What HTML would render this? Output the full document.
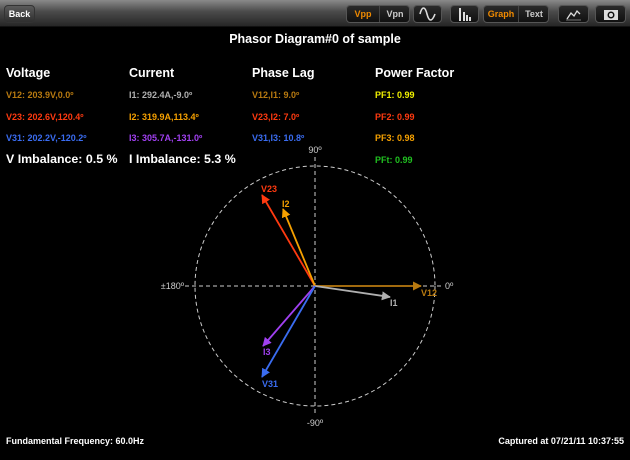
<!DOCTYPE html>
<html><head><meta charset="utf-8"><style>
*{margin:0;padding:0;box-sizing:border-box}
body{width:630px;height:460px;background:#000;position:relative;overflow:hidden;font-family:"Liberation Sans",Arial,sans-serif;font-weight:bold;color:#fff}
.t{position:absolute;white-space:nowrap}
.bar{position:absolute;left:0;top:0;width:630px;height:27px;background:linear-gradient(#8a8a8a,#4a4a4a 45%,#262626);border-bottom:1px solid #111}
.btn{position:absolute;top:5px;height:18px;border-radius:4px;background:linear-gradient(#2a2a2a,#101010);border:1px solid #555;font-size:9px;color:#ccc;text-align:center;line-height:16px}
.h{font-size:12.5px;top:66px}
.v{font-size:9px}
.b{font-size:12.4px;top:152px}
</style></head><body>
<div class="bar"></div>
<div class="btn" style="left:4px;width:31px;color:#fff;background:linear-gradient(#5a5a5a,#2e2e2e);border-color:#333">Back</div>
<div class="btn" style="left:346px;width:64px"><span style="position:absolute;left:0;width:32px;color:#f08a00">Vpp</span><span style="position:absolute;left:32px;width:31px;border-left:1px solid #444">Vpn</span></div>
<div class="btn" style="left:413px;width:29px"><svg width="27" height="16" viewBox="0 0 27 16"><path d="M6 8 C8 0,11 0,13 8 S18 16,21 8" stroke="#ddd" stroke-width="1.6" fill="none"/></svg></div>
<div class="btn" style="left:450px;width:29px"><svg width="27" height="16"><g fill="#ddd"><rect x="8" y="2" width="2" height="13"/><rect x="12" y="6" width="2" height="9"/><rect x="15" y="9" width="2" height="6"/><rect x="18" y="11" width="2" height="4"/></g></svg></div>
<div class="btn" style="left:483px;width:66px"><span style="position:absolute;left:0;width:34px;color:#f08a00">Graph</span><span style="position:absolute;left:34px;width:31px;border-left:1px solid #444">Text</span></div>
<div class="btn" style="left:558px;width:31px"><svg width="29" height="16"><path d="M8 13 L12 7 L15 10 L18 5 L21 8" stroke="#ddd" stroke-width="1.3" fill="none"/><path d="M7 14 H22" stroke="#777"/></svg></div>
<div class="btn" style="left:595px;width:31px"><svg width="29" height="16"><rect x="8" y="4" width="14" height="10" fill="#ddd"/><circle cx="15" cy="9" r="3.5" fill="#111"/><circle cx="15" cy="9" r="2" fill="#ddd"/></svg></div>

<div class="t" style="left:0;width:630px;text-align:center;top:32px;font-size:12.5px">Phasor Diagram#0 of sample</div>

<div class="t h" style="left:6px">Voltage</div>
<div class="t h" style="left:129px">Current</div>
<div class="t h" style="left:252px">Phase Lag</div>
<div class="t h" style="left:375px">Power Factor</div>

<div class="t v" style="left:6px;top:90px;color:#b87a10">V12: 203.9V,0.0º</div>
<div class="t v" style="left:6px;top:112px;color:#ff3a10">V23: 202.6V,120.4º</div>
<div class="t v" style="left:6px;top:133px;color:#3a6cf0">V31: 202.2V,-120.2º</div>
<div class="t v" style="left:129px;top:90px;color:#b0b0b0">I1: 292.4A,-9.0º</div>
<div class="t v" style="left:129px;top:112px;color:#f5a000">I2: 319.9A,113.4º</div>
<div class="t v" style="left:129px;top:133px;color:#a040f0">I3: 305.7A,-131.0º</div>
<div class="t v" style="left:252px;top:90px;color:#b87a10">V12,I1: 9.0º</div>
<div class="t v" style="left:252px;top:112px;color:#ff3a10">V23,I2: 7.0º</div>
<div class="t v" style="left:252px;top:133px;color:#3a6cf0">V31,I3: 10.8º</div>
<div class="t v" style="left:375px;top:90px;color:#f0f000">PF1: 0.99</div>
<div class="t v" style="left:375px;top:112px;color:#ff3a10">PF2: 0.99</div>
<div class="t v" style="left:375px;top:133px;color:#f5a000">PF3: 0.98</div>
<div class="t v" style="left:375px;top:155px;color:#20c020">PFt: 0.99</div>
<div class="t b" style="left:6px">V Imbalance: 0.5 %</div>
<div class="t b" style="left:129px">I Imbalance: 5.3 %</div>

<svg style="position:absolute;left:0;top:0" width="630" height="460">
<defs>
<marker id="a" viewBox="0 0 10 10" refX="9" refY="5" markerWidth="5" markerHeight="5" orient="auto"><path d="M0 0L10 5L0 10z" fill="context-stroke"/></marker>
</defs>
<g stroke="#ccc" stroke-dasharray="4 3" fill="none" stroke-width="1">
<circle cx="315" cy="286" r="120"/>
<line x1="315" y1="157" x2="315" y2="415"/>
<line x1="185" y1="286" x2="441" y2="286"/>
</g>
<g font-family="Liberation Sans,Arial,sans-serif" font-size="9" fill="#ccc" font-weight="normal">
<text x="315" y="153" text-anchor="middle">90º</text>
<text x="315" y="426" text-anchor="middle">-90º</text>
<text x="184" y="289" text-anchor="end">±180º</text>
<text x="445" y="289">0º</text>
</g>
<g stroke-width="1.8" fill="none">
<line x1="315" y1="286" x2="421" y2="286" stroke="#b87a10" marker-end="url(#a)"/>
<line x1="315" y1="286" x2="390" y2="297" stroke="#b0b0b0" marker-end="url(#a)"/>
<line x1="315" y1="286" x2="262" y2="195" stroke="#ff3a10" marker-end="url(#a)"/>
<line x1="315" y1="286" x2="283" y2="209" stroke="#f5a000" marker-end="url(#a)"/>
<line x1="315" y1="286" x2="263" y2="346" stroke="#a040f0" marker-end="url(#a)"/>
<line x1="315" y1="286" x2="262" y2="377" stroke="#3a6cf0" marker-end="url(#a)"/>
</g>
<g font-family="Liberation Sans,Arial,sans-serif" font-size="9" font-weight="bold">
<text x="421" y="296" fill="#b87a10">V12</text>
<text x="390" y="306" fill="#b0b0b0">I1</text>
<text x="261" y="192" fill="#ff3a10">V23</text>
<text x="282" y="207" fill="#f5a000">I2</text>
<text x="263" y="355" fill="#a040f0">I3</text>
<text x="262" y="387" fill="#3a6cf0">V31</text>
</g>
</svg>

<div class="t v" style="left:6px;top:436px;color:#fff">Fundamental Frequency: 60.0Hz</div>
<div class="t v" style="right:6px;top:436px;color:#fff">Captured at 07/21/11 10:37:55</div>
</body></html>
